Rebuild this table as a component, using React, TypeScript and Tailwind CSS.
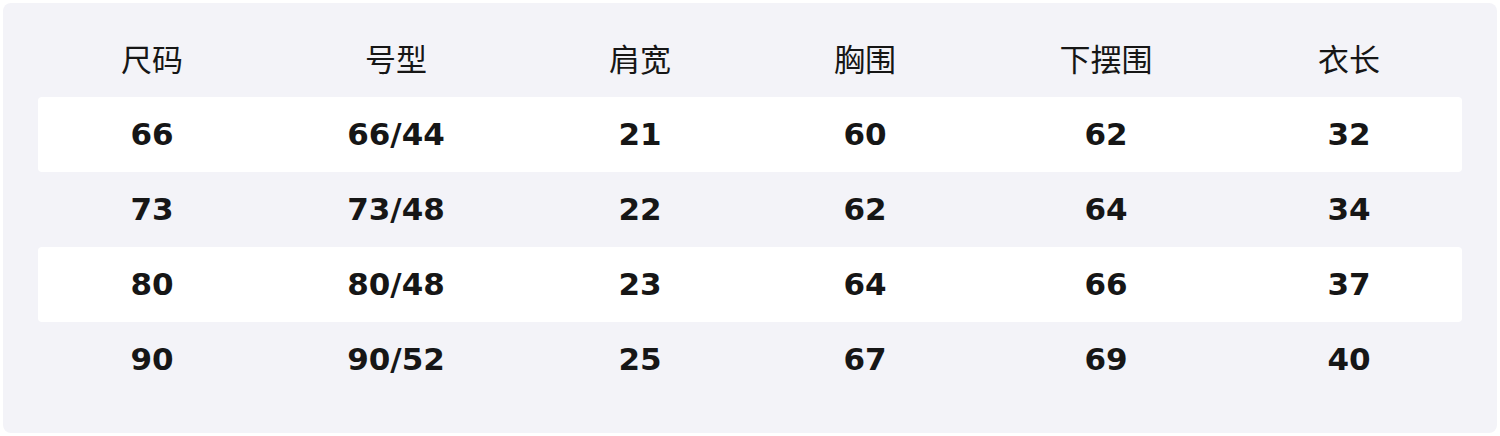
import React from "react";

const headers = ["尺码", "号型", "肩宽", "胸围", "下摆围", "衣长"];
const rows = [
  ["66", "66/44", "21", "60", "62", "32"],
  ["73", "73/48", "22", "62", "64", "34"],
  ["80", "80/48", "23", "64", "66", "37"],
  ["90", "90/52", "25", "67", "69", "40"],
];

const grid = "grid grid-cols-[228px_260px_228px_222px_260px_226px]";

export default function App() {
  return (
    <div className="w-[1500px] h-[436px] bg-white p-[3px]">
      <div className="h-[430px] rounded-lg bg-[#f3f3f8] pt-[19px] px-[35px] pb-[36px]">
        <div className={`${grid} h-[75px] items-center pb-[5px]`}>
          {headers.map((h) => (
            <div
              key={h}
              className="text-center text-[31px] text-[#161616] font-normal leading-none"
              style={{ fontFamily: '"Noto Sans CJK SC", "Noto Sans", sans-serif' }}
            >
              {h}
            </div>
          ))}
        </div>
        {rows.map((r, i) => (
          <div
            key={i}
            className={`${grid} h-[75px] items-center rounded-sm ${i % 2 === 0 ? "bg-white" : ""}`}
          >
            {r.map((c, j) => (
              <div
                key={j}
                className="text-center text-[31px] font-bold text-[#161616] leading-none"
                style={{ fontFamily: '"DejaVu Sans", sans-serif' }}
              >
                {c}
              </div>
            ))}
          </div>
        ))}
      </div>
    </div>
  );
}
